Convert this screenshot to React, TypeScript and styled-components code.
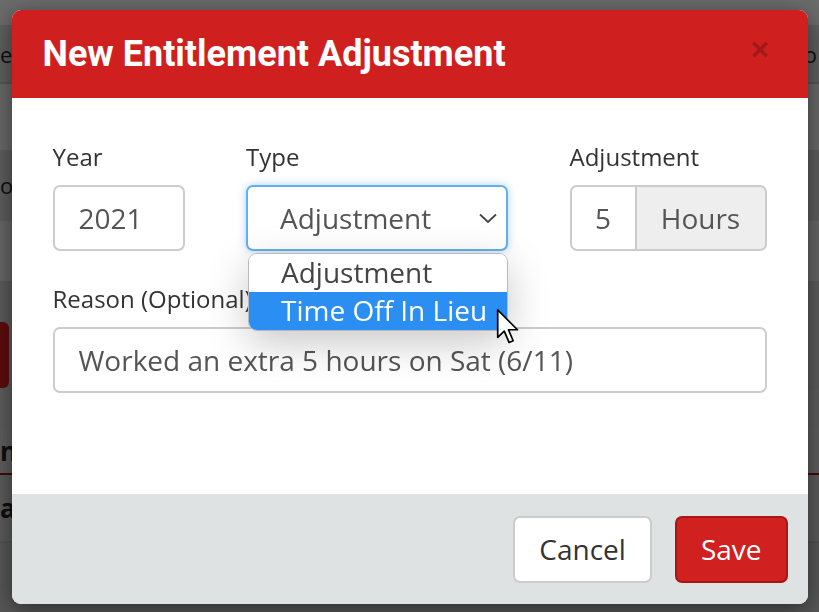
import React from "react";
import styled, { createGlobalStyle } from "styled-components";

const GlobalStyle = createGlobalStyle`
  html, body {
    margin: 0;
    padding: 0;
    width: 819px;
    height: 612px;
    overflow: hidden;
    background: #e9e9e9;
    font-family: "Open Sans", "Liberation Sans", sans-serif;
  }
  * { box-sizing: border-box; }
`;

/* ---------- the page behind the modal ---------- */

const BackPage = styled.div`
  width: 819px;
  height: 612px;
  display: flex;
  flex-direction: column;
`;

type BandProps = { h: number; bg: string; line?: string };
const Band = styled.div<BandProps>`
  height: ${({ h }) => h}px;
  background: ${({ bg }) => bg};
  border-bottom: ${({ line }) => (line ? `2px solid ${line}` : "none")};
  display: flex;
  align-items: center;
  justify-content: space-between;
  padding: 0 2px 0 0;
  font-size: 22px;
  color: #222;
`;

const BackText = styled.span<{ bold?: boolean }>`
  font-weight: ${({ bold }) => (bold ? 700 : 400)};
  font-size: ${({ bold }) => (bold ? "26px" : "22px")};
`;

const BackButton = styled.div`
  width: 9px;
  height: 66px;
  border-radius: 0 6px 6px 0;
  background: #d41c1c;
`;

const Backdrop = styled.div`
  position: fixed;
  inset: 0;
  background: rgba(0, 0, 0, 0.56);
  display: flex;
  justify-content: center;
  align-items: flex-start;
  padding-top: 10px;
`;

/* ---------- modal ---------- */

const Modal = styled.div`
  width: 796px;
  height: 594px;
  background: #fff;
  border-radius: 9px;
  overflow: hidden;
  display: flex;
  flex-direction: column;
  box-shadow: 0 6px 24px rgba(0, 0, 0, 0.5);
`;

const Header = styled.div`
  height: 88px;
  flex: none;
  background: #cf1f1f;
  display: flex;
  align-items: center;
  justify-content: space-between;
  padding: 0 38px 0 31px;
`;

const Title = styled.h4`
  margin: 0;
  font-family: Roboto, "Liberation Sans", sans-serif;
  font-weight: 700;
  font-size: 36px;
  color: #fff;
`;

const Close = styled.span`
  font-family: "Liberation Sans", Arial, sans-serif;
  font-weight: 700;
  font-size: 32px;
  line-height: 1;
  color: #000;
  opacity: 0.22;
  margin-bottom: 10px;
`;

const Body = styled.div`
  flex: 1;
  padding: 43px 41px 0 41px;
  display: flex;
  flex-direction: column;
  gap: 32px;
`;

const Row = styled.div`
  display: grid;
  grid-template-columns: 132px 262px 197px;
  justify-content: space-between;
`;

const Field = styled.div`
  display: flex;
  flex-direction: column;
  gap: 12px;
  position: relative;
`;

const Label = styled.label`
  font-size: 24px;
  line-height: 32px;
  color: #333;
  white-space: nowrap;
`;

const inputBase = `
  height: 66px;
  border: 2px solid #ccc;
  border-radius: 7px;
  background: #fff;
  font-family: "Open Sans", "Liberation Sans", sans-serif;
  font-size: 28px;
  color: #555;
  display: flex;
  align-items: center;
  white-space: nowrap;
`;

const Input = styled.div`
  ${inputBase}
  padding: 0 24px;
`;

const Select = styled.div`
  ${inputBase}
  padding: 0 9px 0 32px;
  justify-content: space-between;
  border-color: #66afe9;
  box-shadow: 0 0 9px rgba(102, 175, 233, 0.55);
`;

const InputGroup = styled.div`
  display: flex;
  height: 66px;
`;

const GroupInput = styled(Input)`
  width: 67px;
  border-radius: 7px 0 0 7px;
  justify-content: center;
  padding: 0;
`;

const Addon = styled.div`
  ${inputBase}
  flex: 1;
  border-left: none;
  border-radius: 0 7px 7px 0;
  background: #eee;
  justify-content: center;
`;

const Dropdown = styled.ul`
  position: absolute;
  top: 112px;
  left: 2px;
  width: 260px;
  margin: 0;
  padding: 0;
  list-style: none;
  background: #fff;
  border: 1px solid #b9b9b9;
  border-radius: 9px;
  overflow: hidden;
  box-shadow: 0 12px 40px rgba(0, 0, 0, 0.22);
  z-index: 2;
`;

const Option = styled.li<{ active?: boolean }>`
  height: 38px;
  padding-left: 32px;
  font-size: 28px;
  line-height: 37px;
  white-space: nowrap;
  color: ${({ active }) => (active ? "#fff" : "#444")};
  background: ${({ active }) => (active ? "#2b8ef3" : "#fff")};
`;

const Cursor = styled.svg`
  position: absolute;
  left: 250px;
  top: 167px;
  z-index: 3;
`;

const Footer = styled.div`
  height: 110px;
  flex: none;
  background: #dee2e3;
  display: flex;
  justify-content: flex-end;
  align-items: center;
  gap: 23px;
  padding: 0 20px 0 0;
`;

const Button = styled.button<{ primary?: boolean }>`
  height: 67px;
  padding: 0 24px;
  font-family: "Open Sans", "Liberation Sans", sans-serif;
  font-size: 28px;
  border-radius: 7px;
  border: 2px solid ${({ primary }) => (primary ? "#a91616" : "#ccc")};
  background: ${({ primary }) => (primary ? "#d02020" : "#fff")};
  color: ${({ primary }) => (primary ? "#fff" : "#333")};
`;

export default function App() {
  return (
    <>
      <GlobalStyle />
      <BackPage>
        <Band h={25} bg="#f3f3f3" />
        <Band h={60} bg="#d9d9d9" line="#c4c4c4">
          <BackText>er</BackText>
          <BackText>o</BackText>
        </Band>
        <Band h={66} bg="#eeeeee" />
        <Band h={72} bg="#d4d4d4">
          <BackText>o</BackText>
        </Band>
        <Band h={60} bg="#e8e8e8" />
        <Band h={40} bg="#d0d0d0" />
        <Band h={70} bg="#d0d0d0">
          <BackButton />
        </Band>
        <Band h={40} bg="#d4d4d4" />
        <Band h={46} bg="#d6d6d6" line="#9e1515">
          <BackText bold>n</BackText>
        </Band>
        <Band h={68} bg="#cfcfcf" line="#bdbdbd">
          <BackText bold>at</BackText>
        </Band>
        <Band h={70} bg="#c6c6c6" />
      </BackPage>
      <Backdrop>
        <Modal>
          <Header>
            <Title>New Entitlement Adjustment</Title>
            <Close>×</Close>
          </Header>
          <Body>
            <Row>
              <Field>
                <Label>Year</Label>
                <Input>2021</Input>
              </Field>
              <Field>
                <Label>Type</Label>
                <Select>
                  <span>Adjustment</span>
                  <svg width="18" height="11" viewBox="0 0 18 11">
                    <path d="M1 1.5 L9 9 L17 1.5" fill="none" stroke="#444" strokeWidth="1.8" />
                  </svg>
                </Select>
                <Dropdown>
                  <Option>Adjustment</Option>
                  <Option active>Time Off In Lieu</Option>
                </Dropdown>
                <Cursor width="24" height="38" viewBox="0 0 14 22">
                  <path
                    d="M1 1 L1 17 L4.8 13.4 L7.6 20 L10 19 L7.3 12.6 L12.5 12.6 Z"
                    fill="#fff"
                    stroke="#000"
                    strokeWidth="1"
                    strokeLinejoin="round"
                  />
                </Cursor>
              </Field>
              <Field>
                <Label>Adjustment</Label>
                <InputGroup>
                  <GroupInput>5</GroupInput>
                  <Addon>Hours</Addon>
                </InputGroup>
              </Field>
            </Row>
            <Field>
              <Label>Reason (Optional)</Label>
              <Input>Worked an extra 5 hours on Sat (6/11)</Input>
            </Field>
          </Body>
          <Footer>
            <Button>Cancel</Button>
            <Button primary>Save</Button>
          </Footer>
        </Modal>
      </Backdrop>
    </>
  );
}
